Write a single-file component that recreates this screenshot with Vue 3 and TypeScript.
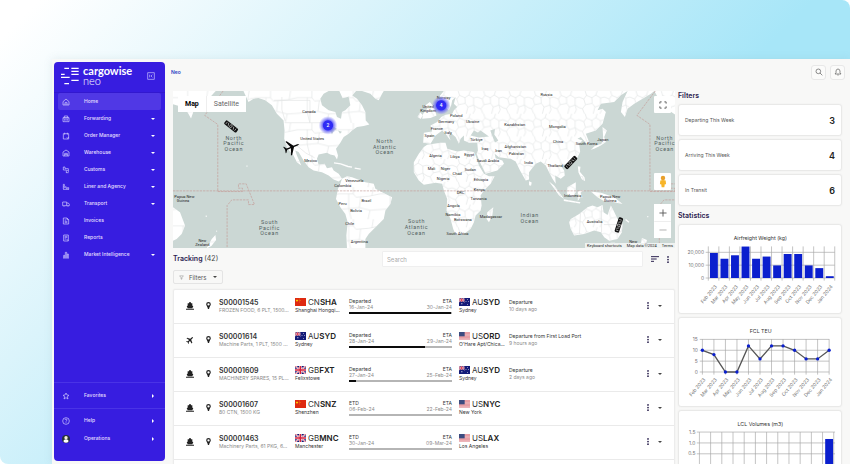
<script setup lang="ts">
import { ref } from 'vue'

interface NavItem { label: string; icon: string; more?: boolean; active?: boolean }
interface Shipment {
  mode: 'ship' | 'plane'; id: string; goods: string
  from: string; fromCity: string; to: string; toCity: string
  state: string; start: string; eta: string; progress: number
  event: string; ago: string
}

const icons: Record<string, string> = {
  home: 'M3 11 12 3l9 8v10H3zM9 21v-7h6v7',
  forwarding: 'M3 8h18v12H3zM7 8V3h10v5M8 12v5M12 12v5M16 12v5M4 9h16',
  order: 'M4 5h16v16H4zM8 2v6M16 2v6M14 17l3 2 3-4',
  warehouse: 'M3 21V9l9-6 9 6v12zM8 21v-8h8v8M8 17h8',
  customs: 'M4 3v9h9v9M9 3v5h10v8M16 12l4 5M4 3h5M13 20h7',
  liner: 'M3 19h18M4 18v-7l6 3v-3l6 3h4v5M4 11V4h3v7M12 17h5',
  transport: 'M2 6h12v11H2zM14 9h5l3 4v4h-8M6 18v2M18 18v2',
  invoices: 'M4 3h11l5 5v13H4zM8 9h4M8 13h8M8 17h8M15 3v5h5',
  reports: 'M5 3h14v18H5zM8 7h8M8 11h8M8 15h4M14 15l4 5',
  market: 'M3 21h18M5 20v-7h3v7M10 20V4h4v16M16 20V9h3v11',
  star: 'M12 3l3 6 6 1-5 4 2 7-6-4-6 4 2-7-5-4 6-1z',
  help: 'M12 2a10 10 0 1 0 0 20 10 10 0 0 0 0-20M9 9c0-4 6-4 6 0 0 2-3 2-3 5M12 16v2',
}

const nav: NavItem[] = [
  { label: 'Home', icon: 'home', active: true },
  { label: 'Forwarding', icon: 'forwarding', more: true },
  { label: 'Order Manager', icon: 'order', more: true },
  { label: 'Warehouse', icon: 'warehouse', more: true },
  { label: 'Customs', icon: 'customs', more: true },
  { label: 'Liner and Agency', icon: 'liner', more: true },
  { label: 'Transport', icon: 'transport', more: true },
  { label: 'Invoices', icon: 'invoices' },
  { label: 'Reports', icon: 'reports' },
  { label: 'Market Intelligence', icon: 'market', more: true },
]

const shipments: Shipment[] = [
  { mode: 'ship', id: 'S00001545', goods: 'FROZEN FOOD, 6 PLT, 1500...', from: 'CNSHA', fromCity: 'Shanghai Hongqi...', to: 'AUSYD', toCity: 'Sydney', state: 'Departed', start: '16-Jan-24', eta: '30-Jan-24', progress: 99, event: 'Departure', ago: '10 days ago' },
  { mode: 'plane', id: 'S00001614', goods: 'Machine Parts, 1 PLT, 1500 ...', from: 'AUSYD', fromCity: 'Sydney', to: 'USORD', toCity: "O'Hare Apt/Chica...", state: 'Departed', start: '28-Jan-24', eta: '29-Jan-24', progress: 74, event: 'Departure from First Load Port', ago: '9 hours ago' },
  { mode: 'ship', id: 'S00001609', goods: 'MACHINERY SPARES, 15 PL...', from: 'GBFXT', fromCity: 'Felixstowe', to: 'AUSYD', toCity: 'Sydney', state: 'Departed', start: '27-Jan-24', eta: '25-Feb-24', progress: 7, event: 'Departure', ago: '2 days ago' },
  { mode: 'ship', id: 'S00001607', goods: '80 CTN, 1500 KG', from: 'CNSNZ', fromCity: 'Shenzhen', to: 'USNYC', toCity: 'New York', state: 'ETD', start: '06-Feb-24', eta: '22-Feb-24', progress: 0, event: '', ago: '' },
  { mode: 'ship', id: 'S00001463', goods: 'Machinery Parts, 61 PKG, 6...', from: 'GBMNC', fromCity: 'Manchester', to: 'USLAX', toCity: 'Los Angeles', state: 'ETD', start: '30-Jan-24', eta: '09-Mar-24', progress: 0, event: '', ago: '' },
]

const filters = [
  { label: 'Departing This Week', count: 3 },
  { label: 'Arriving This Week', count: 4 },
  { label: 'In Transit', count: 6 },
]

const months = ['Feb 2023', 'Mar 2023', 'Apr 2023', 'May 2023', 'Jun 2023', 'Jul 2023', 'Aug 2023', 'Sep 2023', 'Oct 2023', 'Nov 2023', 'Dec 2023', 'Jan 2024']
const air = [19500, 15000, 17700, 24500, 15000, 16700, 9800, 18700, 18700, 9800, 7700, 1400]
const teu = [10, 8, 0, 0, 12, 6, 12, 12, 10, 6, 6, 10]

const barX = (i: number) => 89 + i * 32
const airY = (v: number) => 161 - (v * 39) / 10000
const teuX = (i: number) => 71 + i * 35
const teuY = (v: number) => 164 - (v * 33) / 5
const teuLine = teu.map((v, i) => `${teuX(i)},${teuY(v)}`).join(' ')

const countries: [string, number, number][] = [
  ['Canada', 407, 67], ['United States', 417, 146], ['Mexico', 412, 214], ['Venezuela', 543, 273],
  ['Colombia', 508, 288], ['Peru', 508, 342], ['Brazil', 579, 333], ['Bolivia', 548, 362], ['Chile', 529, 402],
  ['Argentina', 558, 454], ['Norway', 810, 24], ['Russia', 1118, 15], ['United', 764, 52], ['Kingdom', 764, 63],
  ['Poland', 848, 77], ['Germany', 818, 97], ['Ukraine', 897, 96], ['France', 790, 117], ['Italy', 824, 130], ['Spain', 768, 137],
  ['Türkiye', 908, 150], ['Kazakhstan', 1023, 104], ['Mongolia', 1151, 112], ['China', 1153, 157], ['South Korea', 1238, 163],
  ['Japan', 1287, 149], ['Afghanistan', 1025, 171], ['Pakistan', 1028, 193], ['Iraq', 934, 176], ['Iran', 975, 182],
  ['India', 1065, 218], ['Thailand', 1144, 229], ['Algeria', 786, 197], ['Libya', 844, 201], ['Egypt', 887, 195],
  ['Saudi Arabia', 943, 214], ['Mali', 774, 237], ['Niger', 816, 237], ['Chad', 851, 252], ['Sudan', 890, 241],
  ['Nigeria', 809, 268], ['Ethiopia', 922, 271], ['DRC', 861, 307], ['Kenya', 917, 300], ['Tanzania', 915, 325],
  ['Angola', 840, 347], ['Namibia', 838, 373], ['Botswana', 868, 388], ['Madagascar', 952, 381], ['South Africa', 852, 430],
  ['Indonesia', 1197, 317], ['Papua New', 1309, 320], ['Guinea', 1309, 331], ['Australia', 1262, 395], ['New', 1378, 454],
  ['Papua New', 34, 320], ['Guinea', 30, 331], ['New', 88, 452], ['Zealand', 88, 463],
]
const oceans: { lines: string[]; x: number; y: number }[] = [
  { lines: ['North', 'Pacific', 'Ocean'], x: 182, y: 146 },
  { lines: ['North', 'Atlantic', 'Ocean'], x: 634, y: 156 },
  { lines: ['South', 'Pacific', 'Ocean'], x: 289, y: 398 },
  { lines: ['South', 'Atlantic', 'Ocean'], x: 729, y: 396 },
  { lines: ['Indian', 'Ocean'], x: 1068, y: 377 },
  { lines: ['North', 'Pacific', 'Ocean'], x: 1472, y: 146 },
]

const query = ref('')
</script>

<template>
  <div class="page">
    <div class="shell">
      <nav class="sidebar" aria-label="Main">
        <header class="brand">
          <svg class="mark" viewBox="0 0 54 54" aria-hidden="true">
            <path d="M10 4h14M31 4h22M31 13h22M0 22h11M31 22h22M3 31h23M0 31h12M31 40h22M10 50h14" />
          </svg>
          <span class="wordmark"><b>cargowise</b><span>neo</span></span>
          <button class="collapse" type="button" aria-label="Collapse menu">
            <svg viewBox="0 0 24 24"><path d="M2 2h20v20H2zM8 8v8M16 8l-4 4 4 4" /></svg>
          </button>
        </header>
        <ul class="menu">
          <li v-for="item in nav" :key="item.label">
            <a href="#" class="item" :class="{ active: item.active }">
              <svg class="line" viewBox="0 0 24 24"><path :d="icons[item.icon]" /></svg>
              <span>{{ item.label }}</span>
              <svg v-if="item.more" class="caret" viewBox="0 0 8 8"><path d="M0 2h8L4 6z" /></svg>
            </a>
          </li>
        </ul>
        <ul class="menu favorites">
          <li><a href="#" class="item">
            <svg class="line" viewBox="0 0 24 24"><path :d="icons.star" /></svg><span>Favorites</span>
            <svg class="caret" viewBox="0 0 8 8"><path d="M2 0v8l4-4z" /></svg>
          </a></li>
        </ul>
        <ul class="menu account">
          <li><a href="#" class="item">
            <svg class="line" viewBox="0 0 24 24"><path :d="icons.help" /></svg><span>Help</span>
            <svg class="caret" viewBox="0 0 8 8"><path d="M2 0v8l4-4z" /></svg>
          </a></li>
          <li><a href="#" class="item">
            <svg class="avatar" viewBox="0 0 24 24"><circle cx="12" cy="12" r="12" fill="#26303a" /><circle cx="12" cy="8" r="5" fill="#f5f0d8" /><path d="M5 21v-5q7-6 14 0v5q-7 5-14 0" fill="#fff" /></svg>
            <span>Operations</span>
            <svg class="caret" viewBox="0 0 8 8"><path d="M2 0v8l4-4z" /></svg>
          </a></li>
        </ul>
      </nav>

      <div class="content">
        <header class="topbar">
          <a href="#" class="crumb">Neo</a>
          <div class="tools">
            <button type="button" aria-label="Search"><svg viewBox="0 0 24 24"><circle cx="10" cy="10" r="7" /><path d="m15 15 7 7" /></svg></button>
            <button type="button" aria-label="Notifications"><svg viewBox="0 0 24 24"><path d="M3 18h18l-3-4V9q-1-6-6-6T6 9v5zM10 21h4" /></svg></button>
          </div>
        </header>

        <div class="columns">
          <main>
            <section class="map" aria-label="Shipment map">
              <svg class="world" viewBox="0 0 1503 471" preserveAspectRatio="xMidYMid slice">
                <defs>
                  <pattern id="regions" width="76" height="68" patternUnits="userSpaceOnUse">
                    <path d="M0 18l14 6 8-11 16 7 12-8 14 9 12-3M22 13l-4-13M14 24l5 17-9 12 6 15M19 41l20-4 8 11 17-6 12 8M38 20l1 17M64 21l0 21M47 48l-5 20M50 12l4-12M10 53l-10-3M64 42l4 14-6 12" />
                  </pattern>
                  <pattern id="states" width="124" height="96" patternUnits="userSpaceOnUse">
                    <path d="M0 20h44l8 10 38-3 34-7M30 20v44l-30 3M66 29l-4 32 32 8 30-2M62 61l-32 3 8 32M94 69l-6 27M100 25l4-25M44 20V0" />
                  </pattern>
                  <radialGradient id="halo"><stop offset="0.5" stop-color="#2f2bf5" /><stop offset="0.6" stop-color="#5653f5" stop-opacity=".75" /><stop offset="1" stop-color="#6d6af8" stop-opacity="0" /></radialGradient>
                  <g id="box"><rect x="-23" y="-7" width="46" height="14" rx="4" fill="#111" /><path d="M-17-4v8M-12-4l4 8M-4-4v8h6v-8zM7-4l4 8M16-4v8" stroke="#ccc" stroke-width="2" fill="none" /></g>
                </defs>
                <rect width="1503" height="471" fill="#cbd7d4" />
                <g class="land" :class="layer" v-for="layer in ['base', 'coarse']" :key="layer">
                  <path d="M211 0L226 33 241 23 256 21 276 28 296 43 311 68 331 88 334 118 333 143 341 168 351 183 361 193 371 213 384 223 371 193 366 178 376 183 391 208 406 228 421 238 446 243 466 253 481 265 496 271 506 263 496 248 481 238 476 228 461 231 454 218 436 221 431 203 436 190 461 185 471 190 484 193 491 205 494 193 488 173 501 155 511 138 526 128 536 118 551 108 571 105 588 100 577 88 576 63 566 43 551 23 536 13 526 18 531 43 516 58 506 63 503 83 491 78 486 63 466 58 446 43 441 23 451 8 466 0zM498 0l10 22 28-8 12-14zM566 0L591 8 606 23 616 28 626 8 631 0z" />
                  <path d="M506 263L521 255 536 258 576 273 601 278 606 293 626 303 656 318 651 338 636 358 631 383 616 398 601 413 586 428 576 443 576 471 521 471 519 433 523 393 516 368 501 348 488 323 494 293 501 278z" />
                  <path d="M0 348L21 363 36 403 26 428 11 443 0 448zM0 0h128l-20 22-40 20-14 40-18-32L0 40zM116 443l11-12 2 15-14 18-14 7z" />
                </g>
                <g class="land" :class="layer" v-for="layer in ['base', 'fine']" :key="layer">
                  <path d="M721 243L721 213 736 188 751 168 761 161 801 155 816 155 821 173 851 181 871 178 901 183 906 193 916 223 931 248 946 255 963 255 951 278 931 298 921 313 924 343 921 358 906 373 901 393 891 413 871 428 846 430 839 413 831 383 819 358 821 323 811 298 806 278 786 275 751 281 736 268z" />
                  <path d="M811 0L796 18 791 38 801 53 813 48 826 58 833 43 836 28 846 18 841 38 851 48 841 58 836 68 816 71 803 78 791 93 771 103 776 121 751 125 749 155 771 158 786 133 806 118 816 128 831 148 826 133 831 125 846 138 856 158 861 143 871 133 871 148 886 155 911 155 913 178 909 188 919 213 936 248 971 238 991 218 986 208 966 201 963 188 976 198 1011 203 1026 211 1039 238 1056 268 1066 265 1066 243 1086 218 1101 211 1116 223 1126 243 1136 263 1146 278 1144 253 1161 263 1173 253 1171 238 1161 223 1181 218 1206 208 1219 183 1216 158 1226 148 1211 143 1221 138 1236 155 1246 163 1244 148 1236 128 1266 118 1286 98 1296 63 1286 53 1271 58 1281 38 1321 33 1341 13 1361 0zM1361 0L1346 33 1341 63 1353 78 1361 53 1381 38 1431 8 1441 0zM1441 0h62v70l-30-20-14-18z" />
                  <path d="M746 83l3-15 12-15-5-10 13-10 12 15 8 25-18 8zM732 78l8-14 8 8-6 12zM1286 108l13 10-8 20 5 15-15 10-20 10-10 3 12-11 20-7 5-18zM1126 271l15 12 30 40-15-10zM1170 324l50 9-2 4-48-8zM1181 288l25-15v30l-10 15-17-10zM1212 300l18-3-10 8 6 14-6-2-8 12zM1212 225l8 2-2 15 14 16 2 12-10-6-10-20zM1251 301l30 4 40 13 25 20-25-5-30-3-20-12zM941 363l18-15-3 25-10 20-7-10zM1066 270l8 4-2 10-6-2z" />
                  <path d="M1191 383L1216 368 1241 348 1256 343 1271 348 1286 341 1289 363 1301 371 1311 343 1319 358 1331 383 1346 398 1344 423 1331 443 1306 448 1291 438 1281 423 1261 418 1231 428 1201 433 1191 413 1186 393zM1310 454h14l-6 12zM1404 440l15 6-3 12-16 13h-13l14-14z" />
                </g>
                <path class="isles" d="M482 215l20 3 22 8 12 2M544 231l18 3M220 225h3M130 420h2M98 375h3M1355 385l10 8M1420 376h3" />
                <path class="lakes" d="M891 133l10-15 12 6 8-6 25 18-30 3zM950 118l14-4-2 16 12 18-10 6-6-14zM470 116l12-8 10 6-10 4-6 12zM494 118l12 4-6 6zM150 0h50l-12 10h-30z" />
                <path class="borders" d="M302 28h108M336 95h120M326 18v38l10 34M410 28v66M336 160l38 6 24 20 26 14M1220 364l-3 64M1283 345v80M1290 400h48" />
                <g class="dateline">
                  <path d="M0 299H1503" />
                  <path id="meridian" d="M150 0L95 73l39 27v201h74v-10h-12v-13h23l25 62h-18v-14h-50l-14 17v128" />
                  <use href="#meridian" x="1294" />
                </g>
                <g class="country"><text v-for="(c, i) in countries" :key="i" :x="c[1]" :y="c[2]">{{ c[0] }}</text></g>
                <g class="ocean">
                  <text v-for="(o, i) in oceans" :key="i" :y="o.y"><tspan v-for="(l, j) in o.lines" :key="l" :x="o.x" :dy="j ? 17 : 0">{{ l }}</tspan></text>
                </g>
                <use href="#box" transform="translate(174 106) rotate(38)" />
                <use href="#box" transform="translate(1191 214) rotate(-46)" />
                <use href="#box" transform="translate(1335 401) rotate(-72)" />
                <path transform="translate(356 168) rotate(68) scale(2)" fill="#080808" d="M0-12l1 3v6l10 7v2L1 2v6l4 3v1l-5-1-5 1v-1l4-3V2l-10 4V4l10-7v-6z" />
                <g class="cluster">
                  <circle cx="464" cy="103" r="28" /><text x="464" y="109">2</text>
                  <circle cx="803" cy="43" r="28" /><text x="803" y="49">4</text>
                </g>
              </svg>
              <div class="maptype"><button type="button" class="on">Map</button><button type="button">Satellite</button></div>
              <div class="mapctl">
                <button type="button" aria-label="Full screen"><svg viewBox="0 0 18 18"><path d="M2 6V2h4M12 2h4v4M16 12v4h-4M6 16H2v-4" /></svg></button>
                <button type="button" class="pegman" aria-label="Street view"><svg viewBox="0 0 18 26"><circle cx="9" cy="5" r="5" fill="#e8a02c" /><path d="M3 11q6-3 12 0l1 8h-3l-1 7H6l-1-7H2z" fill="#f7b529" /></svg></button>
                <div class="zoom">
                  <button type="button" aria-label="Zoom in"><svg viewBox="0 0 18 18"><path d="M9 1v16M1 9h16" /></svg></button>
                  <button type="button" aria-label="Zoom out" class="out"><svg viewBox="0 0 18 18"><path d="M1 9h16" /></svg></button>
                </div>
              </div>
              <div class="credits"><a href="#">Keyboard shortcuts</a><span>Map data ©2024</span><a href="#">Terms</a></div>
            </section>

            <div class="trackbar">
              <h2>Tracking <span>(42)</span></h2>
              <input v-model="query" type="search" placeholder="Search" aria-label="Search shipments">
              <button type="button" aria-label="Sort"><svg class="sort" viewBox="0 0 24 18"><path d="M0 2h24M0 9h17M0 16h9" /></svg></button>
              <button type="button" aria-label="More"><svg class="dots" viewBox="0 0 6 24"><circle cx="3" cy="3" r="3" /><circle cx="3" cy="12" r="3" /><circle cx="3" cy="21" r="3" /></svg></button>
            </div>
            <button type="button" class="filterbtn">
              <svg viewBox="0 0 24 24"><path d="M3 4h18l-7 9v7h-4v-7z" /></svg><span>Filters</span>
              <svg class="drop" viewBox="0 0 8 8"><path d="M0 2h8L4 6z" /></svg>
            </button>

            <ul class="list">
              <li v-for="s in shipments" :key="s.id" class="row">
                <svg class="mode" viewBox="0 0 24 24">
                  <path v-if="s.mode === 'ship'" d="M9 1h6v3h4v7l3 1-3 7H5l-3-7 3-1V4h4zM0 20h24v3H0z" />
                  <path v-else transform="rotate(45 12 12)" d="M12 0q2 0 2 3v6l9 4v3l-9-2v5l3 3v2l-5-2-5 2v-2l3-3v-5l-9 2v-3l9-4V3q0-3 2-3" />
                </svg>
                <svg class="pin" viewBox="0 0 16 24"><path fill-rule="evenodd" d="M8 0a8 8 0 0 1 8 8c0 5-6 10-6 16H6C6 18 0 13 0 8a8 8 0 0 1 8-8m0 4a4 4 0 1 0 0 8 4 4 0 0 0 0-8" /></svg>
                <div class="cell"><b class="id">{{ s.id }}</b><span class="sub soft">{{ s.goods }}</span></div>
                <div v-for="(port, p) in [{ code: s.from, city: s.fromCity }, { code: s.to, city: s.toCity }]" :key="p" class="cell" :class="p ? 'to' : 'from'">
                  <span class="code">
                    <svg class="flag" viewBox="0 0 33 24" preserveAspectRatio="none">
                      <g v-if="port.code.startsWith('CN')"><path fill="#de2910" d="M0 0h33v24H0z" /><path fill="#ffde00" d="M6 3l1 3h3L8 8l1 3-3-2-3 2 1-3-2-2h3zM12 2h2v2h-2zM14 6h2v2h-2zM13 11h2v2h-2z" /></g>
                      <g v-else-if="port.code.startsWith('US')"><path fill="#f3d9dc" d="M0 0h33v24H0z" /><path stroke="#de7079" stroke-width="2" d="M0 1h33M0 5h33M0 9h33M0 13h33M0 17h33M0 21h33" /><path fill="#3c4c80" d="M0 0h17v13H0z" /></g>
                      <g v-else>
                        <path fill="#131b78" d="M0 0h33v24H0z" />
                        <g :transform="port.code.startsWith('AU') ? 'scale(.5)' : ''">
                          <path stroke="#fff" stroke-width="5" d="M0 0l33 24M33 0L0 24" /><path stroke="#d5203b" stroke-width="2" d="M0 0l33 24M33 0L0 24" />
                          <path stroke="#fff" stroke-width="8" d="M16 0v24M0 12h33" /><path stroke="#d5203b" stroke-width="5" d="M16 0v24M0 12h33" />
                        </g>
                        <path v-if="port.code.startsWith('AU')" fill="#fff" d="M7 16h3v3H7zM24 3h2v2h-2zM20 10h2v2h-2zM28 9h2v2h-2zM24 18h2v2h-2z" />
                      </g>
                    </svg>
                    <span>{{ port.code.slice(0, 2) }}<b>{{ port.code.slice(2) }}</b></span>
                  </span>
                  <span class="sub">{{ port.city }}</span>
                </div>
                <div class="voyage">
                  <span>{{ s.state }}</span><span>ETA</span>
                  <span class="soft">{{ s.start }}</span><span class="soft">{{ s.eta }}</span>
                  <div class="track"><div :style="{ width: s.progress + '%' }"></div></div>
                </div>
                <div class="cell"><span>{{ s.event }}</span><span class="soft">{{ s.ago }}</span></div>
                <button type="button" aria-label="Shipment actions"><svg class="dots" viewBox="0 0 6 24"><circle cx="3" cy="3" r="3" /><circle cx="3" cy="12" r="3" /><circle cx="3" cy="21" r="3" /></svg></button>
                <button type="button" aria-label="Expand"><svg class="drop" viewBox="0 0 8 8"><path d="M0 2h8L4 6z" /></svg></button>
              </li>
              <li class="row"></li>
            </ul>
          </main>

          <aside>
            <h2>Filters</h2>
            <a v-for="f in filters" :key="f.label" href="#" class="card filter"><span>{{ f.label }}</span><b>{{ f.count }}</b></a>
            <h2 class="stats">Statistics</h2>
            <section class="card">
              <svg class="chart" viewBox="0 0 492 267">
                <text class="title" x="247" y="47">Airfreight Weight (kg)</text>
                <path v-for="i in 13" :key="i" class="grid" :d="`M${barX(i - 1)} 65V169`" />
                <path v-for="v in [0, 10000, 20000]" :key="v" class="grid" :d="`M81 ${airY(v)}H473`" />
                <text v-for="v in [0, 10000, 20000]" :key="v" class="tick" x="76" :y="airY(v) + 5">{{ v.toLocaleString('en-US') }}</text>
                <rect v-for="(v, i) in air" :key="i" class="bar" :x="barX(i) + 5" :y="airY(v)" width="24" :height="161 - airY(v)" />
                <text v-for="(m, i) in months" :key="m" class="tick" :transform="`translate(${barX(i) + 27} 188) rotate(-50)`">{{ m }}</text>
              </svg>
            </section>
            <section class="card">
              <svg class="chart" viewBox="0 0 492 267">
                <text class="title" x="248" y="47">FCL TEU</text>
                <path v-for="(m, i) in months" :key="m" class="grid" :d="`M${teuX(i)} 64V172`" />
                <path v-for="v in [0, 5, 10, 15]" :key="v" class="grid" :d="`M63 ${teuY(v)}H456`" />
                <text v-for="v in [0, 5, 10, 15]" :key="v" class="tick" x="57" :y="teuY(v) + 5">{{ v }}</text>
                <polyline class="series" :points="teuLine" />
                <circle v-for="(v, i) in teu" :key="i" class="bar" :cx="teuX(i)" :cy="teuY(v)" r="5" />
                <text v-for="(m, i) in months" :key="m" class="tick" :transform="`translate(${teuX(i) + 10} 188) rotate(-50)`">{{ m }}</text>
              </svg>
            </section>
            <section class="card">
              <svg class="chart" viewBox="0 0 492 267">
                <text class="title" x="247" y="47">LCL Volumes (m3)</text>
                <path v-for="i in 13" :key="i" class="grid" :d="`M${28 + i * 34} 64V162`" />
                <path v-for="i in 4" :key="i" class="grid" :d="`M54 ${31 + i * 33}H474`" />
                <text v-for="(v, i) in ['1.5', '1.0', '0.5']" :key="v" class="tick" x="50" :y="69 + i * 33">{{ v }}</text>
                <rect class="bar" x="444" y="85" width="24" height="78" />
              </svg>
            </section>
          </aside>
        </div>
      </div>
    </div>
  </div>
</template>

<style>
body { margin: 0; background: #fff; }
</style>

<style scoped>
* { box-sizing: border-box; }
.page {
  height: 100vh; overflow: hidden; padding: 59px 0 0 52px;
  border-radius: 0 8px 0 8px;
  background: linear-gradient(135deg, #fff 3%, #dbf4fb 28%, #a7e6f8 62%);
  font-family: Inter, "Liberation Sans", sans-serif; font-size: 5px; line-height: 7px; color: #333;
}
.shell { display: flex; height: 100%; padding: 3px 0 3px 2px; background: #f8f8f7; box-shadow: 0 0 8px rgba(120, 150, 160, .15); }
button { margin: 0; padding: 0; border: 0; background: none; font: inherit; color: inherit; display: flex; align-items: center; justify-content: center; }
a { color: inherit; text-decoration: none; }
ul { list-style: none; margin: 0; padding: 0; }
h2 { margin: 0; font-size: 7px; line-height: 10px; font-weight: 600; color: #2c2350; }
svg { display: block; flex: none; }
.soft { color: #8a8a8a; }

.sidebar { display: flex; flex-direction: column; width: 111px; flex: none; border-radius: 4px; background: #371de0; color: #fff; }
.brand { display: flex; align-items: center; height: 31px; padding: 0 10px 3px 7px; border-bottom: 1px solid #3218cf; }
.mark { width: 18px; height: 18px; }
.mark path { stroke: #fff; stroke-width: 4; }
.wordmark { display: flex; flex-direction: column; flex: 1; margin-left: 4px; font-family: Lato, sans-serif; font-size: 11px; line-height: 10px; }
.wordmark > span { font-weight: 300; }
.collapse svg { width: 8px; height: 8px; fill: none; stroke: #cfc8ff; stroke-width: 2; }
.menu { padding: 0 4px; }
.item { display: grid; grid-template-columns: 20px 1fr 5px; align-items: center; gap: 0 2px; height: 17px; padding: 0 5px 0 4px; border-radius: 2px; font-weight: 500; color: #e4dfff; }
.item.active { background: #5038e5; }
.line { width: 8px; height: 8px; fill: none; stroke: #d8d2ff; stroke-width: 2; }
.avatar { width: 8px; height: 8px; }
.caret { width: 4px; height: 4px; fill: #fff; }
.favorites { margin-top: auto; padding: 4px; border-top: 1px solid #4a33e6; }
.account { display: flex; flex-direction: column; gap: 1px; padding: 3px 4px 14px; border-top: 1px solid #4a33e6; }

.content { flex: 1; min-width: 0; padding: 0 8px; }
.topbar { display: flex; align-items: center; justify-content: space-between; height: 20px; margin: 0 -3px 0 -2px; }
.crumb { font-weight: 600; color: #2a3ec4; }
.tools { display: flex; gap: 4px; }
.tools button { width: 15px; height: 15px; border: 1px solid #e8e8e8; border-radius: 3px; background: #fbfbfa; }
.tools svg { width: 8px; height: 8px; fill: none; stroke: #555; stroke-width: 2; }
.columns { display: grid; grid-template-columns: minmax(0, 1fr) 164px; gap: 3px; padding-top: 9px; }

.map { position: relative; }
.world { width: 100%; aspect-ratio: 1503 / 471; }
.land path { stroke: none; }
.base path { fill: #fff; }
.fine path { fill: url(#regions); }
.coarse path { fill: url(#states); }
pattern path, .borders { fill: none; stroke: #e2e4e4; stroke-width: 2; }
.isles { fill: none; stroke: #fdfdfd; stroke-width: 4; }
.lakes { fill: #cbd7d4; }
.dateline { fill: none; stroke: #c59c98; stroke-width: 2; stroke-dasharray: 7 3; }
.country { font: 12px Roboto, sans-serif; text-anchor: middle; fill: #222; }
.ocean { font: 16px Roboto, sans-serif; text-anchor: middle; fill: #52615f; letter-spacing: 2px; }
.cluster { font: 500 15px Roboto, sans-serif; text-anchor: middle; fill: #fff; }
.cluster circle { fill: url(#halo); }
.maptype { position: absolute; top: 5px; left: 5px; display: flex; background: #fff; font-family: Roboto, sans-serif; font-size: 7px; color: #666; }
.maptype button { height: 16px; padding: 0 7px; }
.maptype .on { font-weight: 700; color: #000; border-right: 1px solid #eee; }
.mapctl { position: absolute; top: 5px; right: 4px; bottom: 10px; width: 17px; display: flex; flex-direction: column; }
.mapctl button { width: 17px; height: 17px; background: #fff; border-radius: 1px; }
.mapctl svg { width: 8px; height: 8px; fill: none; stroke: #555; stroke-width: 2; }
.mapctl .pegman { margin-top: auto; margin-bottom: 14px; }
.mapctl .pegman svg { width: 8px; height: 13px; stroke: none; }
.zoom { background: #fff; }
.zoom .out { border-top: 1px solid #eee; }
.zoom .out svg { stroke: #aaa; }
.credits { position: absolute; right: 0; bottom: 0; display: flex; gap: 5px; padding: 0 2px; background: #eff2f1; font-family: Roboto, sans-serif; font-size: 4px; line-height: 5px; color: #222; }

.trackbar { display: flex; align-items: center; gap: 8px; margin-top: 3px; padding-right: 6px; }
.trackbar h2 { width: 201px; flex: none; }
.trackbar h2 span { font-weight: 400; color: #444; }
.trackbar input { flex: 1; min-width: 0; height: 16px; padding: 0 4px; border: 1px solid #efefef; border-radius: 1px; background: #fff; font: inherit; font-size: 6px; outline: 0; }
.trackbar input::placeholder { color: #aaa; }
.sort { width: 8px; height: 6px; fill: none; stroke: #2c2350; stroke-width: 3; }
.dots { width: 2px; height: 7px; fill: #2c2350; }
.drop { width: 4px; height: 4px; fill: #444; }
.filterbtn { height: 14px; margin: 3px 0 5px; padding: 0 5px; gap: 5px; border: 1px solid #e4e4e4; border-radius: 2px; font-size: 6px; color: #555; }
.filterbtn svg:first-child { width: 5px; height: 5px; fill: none; stroke: #777; stroke-width: 2; }
.filterbtn .drop { margin-left: 2px; }
.list { border: 1px solid #ececec; border-radius: 2px; background: #fff; box-shadow: 0 0 2px rgba(0, 0, 0, .06); }
.row { display: grid; grid-template-columns: 16px 13px 72px 50px 106px 46px minmax(0, 1fr) 8px 8px; align-items: center; gap: 4px; height: 34px; padding: 0 10px 2px 8px; border-bottom: 1px solid #eaeaea; }
.mode { width: 8px; height: 8px; justify-self: center; fill: #222; }
.pin { width: 5px; height: 7px; justify-self: center; fill: #222; }
.cell { display: flex; flex-direction: column; min-width: 0; }
.id { font-size: 7px; line-height: 9px; font-weight: 600; color: #333; }
.sub { white-space: nowrap; }
.voyage { grid-row: 1; grid-column: 5; }
.to { grid-row: 1; grid-column: 6; }
.code { display: flex; align-items: center; gap: 2px; font-size: 8px; line-height: 10px; color: #333; }
.code b { font-weight: 600; color: #222; }
.flag { width: 11px; height: 8px; }
.voyage { display: grid; grid-template-columns: 1fr auto; line-height: 6px; padding-right: 3px; }
.voyage span:nth-child(even) { text-align: right; }
.track { grid-column: 1 / -1; height: 2px; margin-top: 2px; background: #b5b5b5; }
.track div { height: 100%; background: #0c0c0c; }

aside h2 { margin-bottom: 3px; }
aside .stats { margin: 5px 0 3px; }
.card { display: block; margin-bottom: 3px; border: 1px solid #e9e9e8; border-radius: 3px; background: #fff; box-shadow: 0 0 2px rgba(0, 0, 0, .05); }
.filter { display: flex; align-items: center; justify-content: space-between; height: 32px; padding: 0 6px; color: #555; }
.filter b { font-size: 9px; font-weight: 600; color: #222; }
.chart { width: 100%; }
.title { font-size: 16px; text-anchor: middle; fill: #333; }
.tick { font-size: 15px; text-anchor: end; fill: #777; }
.grid { stroke: #a5a5a5; stroke-width: 2; }
.series { fill: none; stroke: #555; stroke-width: 4; }
.bar { fill: #0b1fce; }
</style>
